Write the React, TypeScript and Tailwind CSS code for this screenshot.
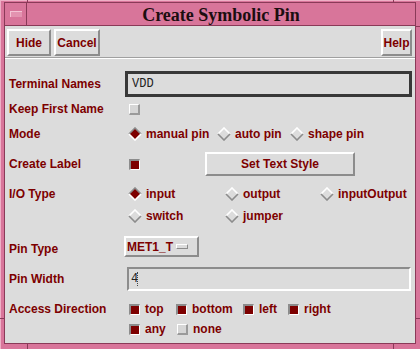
import React from 'react';

const ink = 'text-[#7d0000]';

function Diamond({ on }: { on?: boolean }) {
  return (
    <svg width="14" height="14" viewBox="0 0 14 14" className="shrink-0">
      <polygon points="7,1 13,7 7,13 1,7" fill={on ? '#7d0000' : '#dcdcdc'} />
      <polyline points="1,7 7,1 13,7" fill="none" stroke={on ? '#8c8c8c' : '#ffffff'} strokeWidth="1.6" />
      <polyline points="1,7 7,13 13,7" fill="none" stroke={on ? '#ffffff' : '#8c8c8c'} strokeWidth="1.6" />
    </svg>
  );
}

function Check({ on }: { on?: boolean }) {
  return (
    <span
      className={
        on
          ? 'block w-[11px] h-[11px] shrink-0 bg-[#7d0000] border-t-2 border-l-2 border-b border-r border-t-[#8c8c8c] border-l-[#8c8c8c] border-b-white border-r-white'
          : 'block w-[11px] h-[11px] shrink-0 bg-[#d6d6d6] border-t border-l border-b-2 border-r-2 border-t-white border-l-white border-b-[#9a9a9a] border-r-[#9a9a9a]'
      }
    />
  );
}

function Radio({ label, on, w }: { label: string; on?: boolean; w?: string }) {
  return (
    <div className={`flex items-center gap-[4px] ${w ?? ''}`}>
      <Diamond on={on} />
      <span>{label}</span>
    </div>
  );
}

function Box({ label, on, w }: { label: string; on?: boolean; w?: string }) {
  return (
    <div className={`flex items-center gap-[5px] ${w ?? ''}`}>
      <Check on={on} />
      <span>{label}</span>
    </div>
  );
}

const raised =
  'bg-[#dcdcdc] border-t-2 border-l-2 border-b-2 border-r-2 border-t-white border-l-white border-b-[#8c8c8c] border-r-[#8c8c8c]';

function Label({ children }: { children: React.ReactNode }) {
  return <div className="w-[120px] pl-[4px] shrink-0">{children}</div>;
}

export default function App() {
  return (
    <div className="relative w-[420px] h-[349px] bg-[#d8759a] pt-[2px] px-[4px] pb-[5px] flex flex-col shadow-[inset_1px_1px_0_#eeb0c6]">
      {/* frame resize notches */}
      <span className="absolute left-[27px] top-0 w-px h-[3px] bg-[#8a3a58]" />
      <span className="absolute left-[393px] top-0 w-px h-[3px] bg-[#8a3a58]" />
      <span className="absolute left-[27px] bottom-0 w-px h-[5px] bg-[#8a3a58]" />
      <span className="absolute left-[393px] bottom-0 w-px h-[5px] bg-[#8a3a58]" />
      <span className="absolute left-0 top-[318px] w-[4px] h-px bg-[#8a3a58]" />
      <span className="absolute right-0 top-[318px] w-[4px] h-px bg-[#8a3a58]" />
      <span className="absolute right-0 top-[26px] w-[4px] h-px bg-[#8a3a58]" />

      <div className="flex-1 flex flex-col border border-[#8a3a58]">
        {/* title bar */}
        <div className="h-[23px] flex items-stretch border-b border-[#8a3a58]">
          <div className="w-[22px] border-r border-[#8a3a58] flex items-center justify-center">
            <span className="block w-[12px] h-[6px] bg-[#e393b0] border-t border-l border-[#f4c2d4] border-b-[#a8486e] border-r-[#a8486e]" />
          </div>
          <div
            className="flex-1 flex items-center justify-center pt-[1px] text-[18px] font-bold text-[#1c0e10] leading-none"
            style={{ fontFamily: '"Liberation Serif", "Times New Roman", serif' }}
          >
            Create Symbolic Pin
          </div>
        </div>

        {/* body */}
        <div
          className={`flex-1 bg-[#dcdcdc] flex flex-col text-[12px] font-bold ${ink}`}
          style={{ fontFamily: '"Liberation Sans", Arial, sans-serif' }}
        >
          <div className="h-[31px] flex items-start pt-[3px] pl-[2px] pr-[3px] gap-[3px]">
            <button className={`${raised} w-[44px] h-[27px] ${ink} font-bold`}>Hide</button>
            <button className={`${raised} w-[46px] h-[27px] ${ink} font-bold`}>Cancel</button>
            <div className="flex-1" />
            <button className={`${raised} w-[31px] h-[27px] ${ink} font-bold`}>Help</button>
          </div>
          <div className="h-[2px] border-t border-[#a0a0a0] border-b border-b-white" />

          <div className="flex flex-col pt-[12px]">
            <div className="h-[26px] flex items-center">
              <Label>Terminal Names</Label>
              <div
                className="flex-1 mr-[3px] h-[26px] border-[3px] border-[#383838] bg-[#dcdcdc] flex items-center pl-[4px] text-[12px] font-normal text-[#222]"
                style={{ fontFamily: '"Liberation Mono", "Courier New", monospace' }}
              >
                VDD
              </div>
            </div>

            <div className="h-[24px] flex items-center">
              <Label>Keep First Name</Label>
              <div className="pl-[4px]">
                <Check />
              </div>
            </div>

            <div className="h-[26px] flex items-center">
              <Label>Mode</Label>
              <div className="pl-[3px] flex items-center">
                <Radio label="manual pin" on w="w-[89px]" />
                <Radio label="auto pin" w="w-[73px]" />
                <Radio label="shape pin" />
              </div>
            </div>

            <div className="h-[34px] flex items-center">
              <Label>Create Label</Label>
              <div className="pl-[4px] flex items-center">
                <Check on />
                <button className={`${raised} ml-[65px] w-[150px] h-[24px] ${ink} font-bold`}>
                  Set Text Style
                </button>
              </div>
            </div>

            <div className="h-[26px] flex items-center">
              <Label>I/O Type</Label>
              <div className="pl-[3px] flex items-center">
                <Radio label="input" on w="w-[97px]" />
                <Radio label="output" w="w-[95px]" />
                <Radio label="inputOutput" />
              </div>
            </div>

            <div className="h-[18px] flex items-center">
              <Label>{''}</Label>
              <div className="pl-[3px] flex items-center">
                <Radio label="switch" w="w-[97px]" />
                <Radio label="jumper" />
              </div>
            </div>

            <div className="h-[32px] mt-[8px] flex items-center">
              <Label>Pin Type</Label>
              <button
                className={`${raised} -ml-[1px] mt-[-5px] w-[75px] h-[21px] ${ink} font-bold flex items-center pl-[1px] gap-[3px]`}
              >
                <span>MET1_T</span>
                <span className="block w-[12px] h-[5px] bg-[#dcdcdc] border-t border-l border-t-white border-l-white border-b border-r border-b-[#8c8c8c] border-r-[#8c8c8c]" />
              </button>
            </div>

            <div className="h-[24px] mt-[2px] flex items-center">
              <Label>Pin Width</Label>
              <div
                className="flex-1 ml-[2px] mr-[4px] h-[24px] bg-[#dcdcdc] border-t-2 border-l-2 border-b-2 border-r-2 border-t-[#8c8c8c] border-l-[#8c8c8c] border-b-white border-r-white flex items-center pl-[2px] text-[12px] font-normal text-[#222]"
                style={{ fontFamily: '"Liberation Mono", "Courier New", monospace' }}
              >
                <span>4</span>
                <span className="block h-[14px] border-l border-dotted border-[#444] -ml-[1px]" />
              </div>
            </div>

            <div className="h-[20px] mt-[8px] flex items-center">
              <Label>Access Direction</Label>
              <div className="pl-[4px] flex items-center">
                <Box label="top" on w="w-[47px]" />
                <Box label="bottom" on w="w-[67px]" />
                <Box label="left" on w="w-[45px]" />
                <Box label="right" on />
              </div>
            </div>

            <div className="h-[20px] flex items-center">
              <Label>{''}</Label>
              <div className="pl-[4px] flex items-center">
                <Box label="any" on w="w-[48px]" />
                <Box label="none" />
              </div>
            </div>
          </div>
        </div>
      </div>
    </div>
  );
}
